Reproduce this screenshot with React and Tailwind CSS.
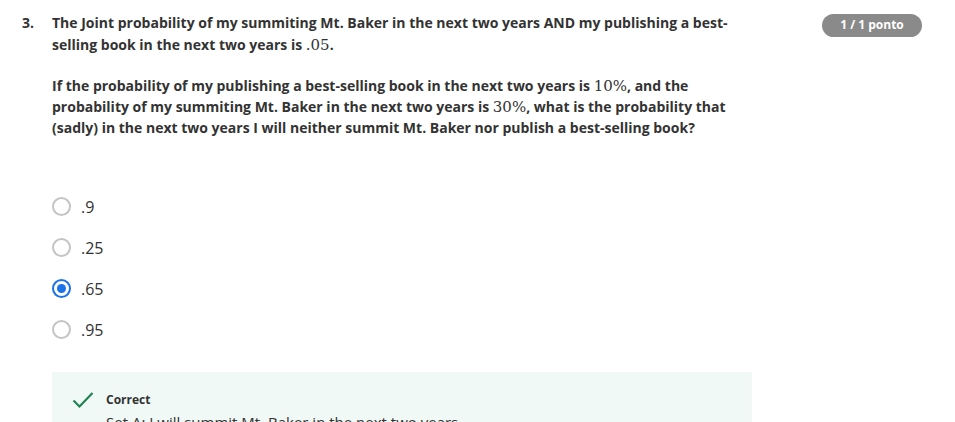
import { useState } from 'react';

const options = ['.9', '.25', '.65', '.95'];

function M({ children }) {
  return <span className="font-['DejaVu_Serif','Liberation_Serif',serif] font-normal text-[15px] leading-none">{children}</span>;
}

function Radio({ checked }) {
  return checked ? (
    <span className="w-[19px] h-[19px] rounded-full border-2 border-[#1a73e8] flex items-center justify-center">
      <span className="w-[9px] h-[9px] rounded-full bg-[#1a73e8]" />
    </span>
  ) : (
    <span className="w-[19px] h-[19px] rounded-full border-2 border-[#c4c4c4]" />
  );
}

export default function App() {
  const [picked, setPicked] = useState('.65');

  return (
    <div className="h-[422px] overflow-hidden bg-white text-[#333] font-['Open_Sans',sans-serif]">
      <div className="flex pt-[12px]">
        <div className="w-[52px] pl-[22px] text-[14px] leading-[22px] font-bold">3.</div>
        <div className="w-[680px] text-[14px] font-bold">
          <p className="leading-[22px]">
            The Joint probability of my summiting Mt. Baker in the next two years AND my publishing a best-selling book in the next two years is <M>.05</M>.
          </p>
          <p className="leading-[21px] mt-[19px]">
            If the probability of my publishing a best-selling book in the next two years is <M>10%</M>, and the probability of my summiting Mt. Baker in the next two years is <M>30%</M>, what is the probability that (sadly) in the next two years I will neither summit Mt. Baker nor publish a best-selling book?
          </p>

          <div className="mt-[59px] flex flex-col gap-[22px] font-normal">
            {options.map((o) => (
              <label key={o} className="flex items-center gap-[10px] h-[19px] cursor-pointer" onClick={() => setPicked(o)}>
                <Radio checked={picked === o} />
                <span className="text-[16px] text-[#333]">{o}</span>
              </label>
            ))}
          </div>

          <div className="mt-[33px] w-[700px] bg-[#f0f9f6] px-[20px] pt-[19px] pb-[20px]">
            <div className="flex items-center gap-[12px]">
              <svg width="22" height="18" viewBox="0 0 22 18" fill="none">
                <path d="M1.5 9.5 L7.5 15.5 L20.5 2" stroke="#1f8354" strokeWidth="2.2" />
              </svg>
              <span className="text-[12px] font-bold text-[#333]">Correct</span>
            </div>
            <p className="pl-[34px] mt-[2px] text-[15px] font-normal">
              Set A: I will summit Mt. Baker in the next two years
            </p>
          </div>
        </div>
        <div className="ml-auto mr-[33px] -mt-[1px]">
          <span className="inline-flex items-center justify-center w-[100px] h-[23px] rounded-full bg-[#8a8a8a] text-white text-[12px] font-bold">
            1 / 1 ponto
          </span>
        </div>
      </div>
    </div>
  );
}
